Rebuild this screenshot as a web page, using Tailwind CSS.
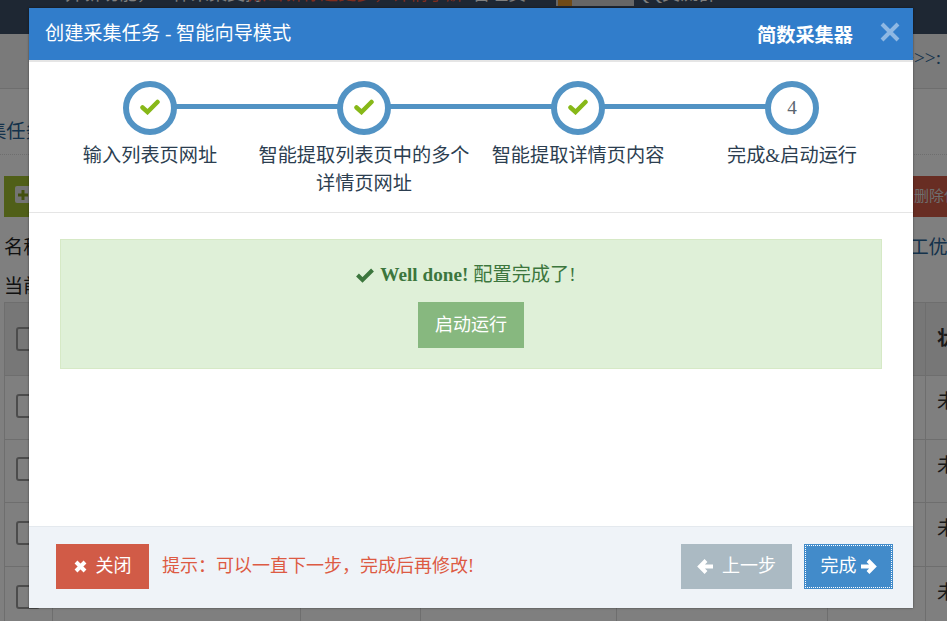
<!DOCTYPE html>
<html lang="zh">
<head>
    <meta charset="UTF-8">
    <title>简数采集器</title>
    <script src="https://cdn.jsdelivr.net/npm/@tailwindcss/browser@4"></script>
</head>
<body class="w-[947px] h-[621px] overflow-hidden relative bg-white font-['Liberation_Serif','Noto_Sans_CJK_SC',serif] text-[19.2px] text-[#333]">
    <!-- page behind the dialog -->
    <div class="h-[34px] bg-[#3d4f66] overflow-hidden flex items-start pl-[65px] text-[18px] leading-[28px] text-white whitespace-nowrap">
        <span class="-mt-[20px] w-[183px]">并新功能&#xFF0C;一体采集支持</span>
        <span class="-mt-[20px] w-[224px] text-[#ff5a3c]">点击新标题更多&#xFF0C;详情了解</span>
        <span class="-mt-[20px] w-[84px]">管理员&#xFF1A;</span>
        <span class="w-[78px] h-[6px] bg-[#ccc] mr-[2px] flex items-start pl-[2px]"><span class="w-[14px] h-[6px] bg-[#e0952c]"></span></span>
        <span class="-mt-[20px]">QQ交流群</span>
    </div>
    <div class="h-[55px] bg-[#f5f5f5] border-b border-[#ddd] flex justify-end pt-[10px] pr-[6px] text-[#2a6496]">&gt;&gt;&gt;:</div>
    <div class="h-[66px] pt-[29px] -ml-[32px] text-[#2a6496] border-b border-dotted border-[#ddd]">采集任务</div>
    <div class="flex justify-between h-[42px] mt-[21px]">
        <div class="w-[80px] h-[41px] bg-[#a0be30] ml-[4px] pl-[11px] pt-[10px]">
            <div class="w-[16px] h-[17px] rounded-[2px] bg-[#e8e8e8] flex items-center justify-center">
                <svg width="12" height="12" viewBox="0 0 12 12"><path d="M6 1 V11 M1 6 H11" stroke="#87a01f" stroke-width="3"/></svg>
            </div>
        </div>
        <div class="w-[100px] h-[41px] bg-[#d15b47] text-[#ddd] pl-[2px] -mr-[65px] pt-[9px] text-[15px] whitespace-nowrap">删除任务</div>
    </div>
    <div class="flex justify-between mt-[16px] h-[28px] leading-[28px] text-[#222] px-[4px] whitespace-nowrap">
        <span>名称</span><span class="text-[#2a6496] -mr-[24px]">施工优化</span>
    </div>
    <div class="px-[4px] mt-[13px] h-[24px] leading-[24px] text-[#222]">当前</div>
    <table class="ml-[4px] mt-[3px] w-[1000px] table-fixed border-collapse">
        <colgroup>
            <col class="w-[48px]"><col class="w-[248px]"><col class="w-[120px]"><col class="w-[196px]"><col class="w-[211px]"><col class="w-[98px]"><col>
        </colgroup>
        <tbody>
            <tr class="h-[73px] bg-[#eee]">
                <td class="border border-[#ddd] pl-[11px]"><div class="w-[24px] h-[24px] border-2 border-[#999] rounded-[3px]"></div></td>
                <td class="border border-[#ddd]"></td><td class="border border-[#ddd]"></td><td class="border border-[#ddd]"></td><td class="border border-[#ddd]"></td><td class="border border-[#ddd]"></td>
                <td class="border border-[#ddd] pl-[11px] font-bold whitespace-nowrap">状态</td>
            </tr>
            <tr class="h-[64px]">
                <td class="border border-[#ddd] pl-[11px] pb-[4px]"><div class="w-[24px] h-[24px] border-2 border-[#999] rounded-[3px]"></div></td>
                <td class="border border-[#ddd]"></td><td class="border border-[#ddd]"></td><td class="border border-[#ddd]"></td><td class="border border-[#ddd]"></td><td class="border border-[#ddd]"></td>
                <td class="border border-[#ddd] pl-[11px] pb-[10px] whitespace-nowrap">未启动</td>
            </tr>
            <tr class="h-[63px]">
                <td class="border border-[#ddd] pl-[11px] pb-[4px]"><div class="w-[24px] h-[24px] border-2 border-[#999] rounded-[3px]"></div></td>
                <td class="border border-[#ddd]"></td><td class="border border-[#ddd]"></td><td class="border border-[#ddd]"></td><td class="border border-[#ddd]"></td><td class="border border-[#ddd]"></td>
                <td class="border border-[#ddd] pl-[11px] pb-[10px] whitespace-nowrap">未启动</td>
            </tr>
            <tr class="h-[64px]">
                <td class="border border-[#ddd] pl-[11px] pb-[4px]"><div class="w-[24px] h-[24px] border-2 border-[#999] rounded-[3px]"></div></td>
                <td class="border border-[#ddd]"></td><td class="border border-[#ddd]"></td><td class="border border-[#ddd]"></td><td class="border border-[#ddd]"></td><td class="border border-[#ddd]"></td>
                <td class="border border-[#ddd] pl-[11px] pb-[10px] whitespace-nowrap">未启动</td>
            </tr>
            <tr class="h-[64px]">
                <td class="border border-[#ddd] pl-[11px] pb-[4px]"><div class="w-[24px] h-[24px] border-2 border-[#999] rounded-[3px]"></div></td>
                <td class="border border-[#ddd]"></td><td class="border border-[#ddd]"></td><td class="border border-[#ddd]"></td><td class="border border-[#ddd]"></td><td class="border border-[#ddd]"></td>
                <td class="border border-[#ddd] pl-[11px] pb-[10px] whitespace-nowrap">未启动</td>
            </tr>
        </tbody>
    </table>

    <!-- backdrop -->
    <div class="absolute inset-0 bg-black/50"></div>

    <!-- dialog -->
    <div class="absolute left-[29px] top-[8px] w-[884px] h-[600px] bg-white flex flex-col shadow-[0_0_2px_rgba(0,0,0,0.5)]">
        <div class="h-[52px] bg-[#317dcb] flex items-center pl-[16px] pr-[12px] text-white shrink-0">
            <span>创建采集任务 - 智能向导模式</span>
            <span class="ml-auto font-bold font-['Noto_Sans_CJK_SC',sans-serif]">简数采集器</span>
            <svg class="ml-[26px] mb-[5px]" width="22" height="22" viewBox="0 0 22 22"><path d="M3 3 L19 19 M19 3 L3 19" stroke="#8fb8e3" stroke-width="4"/></svg>
        </div>

        <div class="h-[153px] border-t-2 border-b border-[#e5e5e5] shrink-0 relative">
            <div class="absolute left-[121px] top-[42px] w-[642px] h-[5px] bg-[#5293c4]"></div>
            <div class="grid grid-cols-4 px-[14px] pt-[19px] relative">
                <div class="flex flex-col items-center">
                    <div class="w-[54px] h-[54px] rounded-full border-[6px] border-[#5293c4] bg-white flex items-center justify-center">
                        <svg class="mb-[3px]" width="20" height="16" viewBox="0 0 20 16"><path d="M2.5 8.5 L7.5 13 L17.5 3" fill="none" stroke="#87b818" stroke-width="4.5" stroke-linecap="round"/></svg>
                    </div>
                    <p class="mt-[7px] leading-[28px] text-center text-[#2c3e50] w-[214px]">输入列表页网址</p>
                </div>
                <div class="flex flex-col items-center">
                    <div class="w-[54px] h-[54px] rounded-full border-[6px] border-[#5293c4] bg-white flex items-center justify-center">
                        <svg class="mb-[3px]" width="20" height="16" viewBox="0 0 20 16"><path d="M2.5 8.5 L7.5 13 L17.5 3" fill="none" stroke="#87b818" stroke-width="4.5" stroke-linecap="round"/></svg>
                    </div>
                    <p class="mt-[7px] leading-[28px] text-center text-[#2c3e50] w-[214px]">智能提取列表页中的多个详情页网址</p>
                </div>
                <div class="flex flex-col items-center">
                    <div class="w-[54px] h-[54px] rounded-full border-[6px] border-[#5293c4] bg-white flex items-center justify-center">
                        <svg class="mb-[3px]" width="20" height="16" viewBox="0 0 20 16"><path d="M2.5 8.5 L7.5 13 L17.5 3" fill="none" stroke="#87b818" stroke-width="4.5" stroke-linecap="round"/></svg>
                    </div>
                    <p class="mt-[7px] leading-[28px] text-center text-[#2c3e50] w-[214px]">智能提取详情页内容</p>
                </div>
                <div class="flex flex-col items-center">
                    <div class="w-[54px] h-[54px] rounded-full border-[6px] border-[#5293c4] bg-white flex items-center justify-center text-[#5a6570]">4</div>
                    <p class="mt-[7px] leading-[28px] text-center text-[#2c3e50] w-[214px]">完成&amp;启动运行</p>
                </div>
            </div>
        </div>

        <div class="flex-1 px-[31px] pt-[26px]">
            <div class="h-[130px] bg-[#dff0d8] border border-[#d6e9c6] flex flex-col items-center pt-[21px] text-[#3c763d]">
                <p class="leading-[28px] flex items-center pr-[10px] whitespace-pre">
                    <svg class="mr-[6px]" width="18" height="16" viewBox="0 0 18 16"><path d="M1.5 8 L6.5 13 L16.5 3" fill="none" stroke="#3c763d" stroke-width="4"/></svg><strong>Well done!</strong><span class="ml-[5px]">配置完成了!</span>
                </p>
                <div class="mt-[13px] w-[106px] h-[46px] bg-[#87b87f] text-white text-[18px] flex items-center justify-center">启动运行</div>
            </div>
        </div>

        <div class="h-[82px] bg-[#eff3f8] border-t border-[#e4e9ee] shrink-0 flex items-center pl-[27px] pr-[20px] pb-[3px] text-[18px]">
            <div class="w-[93px] h-[45px] bg-[#d15b47] text-white flex items-center justify-center gap-[9px]">
                <svg width="13" height="13" viewBox="0 0 13 13"><path d="M2 2 L11 11 M11 2 L2 11" stroke="#fff" stroke-width="4"/></svg>
                关闭
            </div>
            <p class="ml-[13px] text-[#dd5a43] whitespace-nowrap">提示&#xFF1A;可以一直下一步&#xFF0C;完成后再修改!</p>
            <div class="ml-auto w-[111px] h-[45px] bg-[#abbac3] text-white flex items-center justify-center gap-[8px]">
                <svg width="17" height="15" viewBox="0 0 17 15"><path d="M16 7.5 H4 M9 1.5 L3 7.5 L9 13.5" fill="none" stroke="#fff" stroke-width="4"/></svg>
                上一步
            </div>
            <div class="ml-[12px] w-[89px] h-[45px] bg-[#428bca] text-white flex items-center justify-center gap-[3px] outline-1 outline-dotted outline-white -outline-offset-2 border border-[#428bca]">
                完成
                <svg width="17" height="15" viewBox="0 0 17 15"><path d="M1 7.5 H13 M8 1.5 L14 7.5 L8 13.5" fill="none" stroke="#fff" stroke-width="4"/></svg>
            </div>
        </div>
    </div>
</body>
</html>
